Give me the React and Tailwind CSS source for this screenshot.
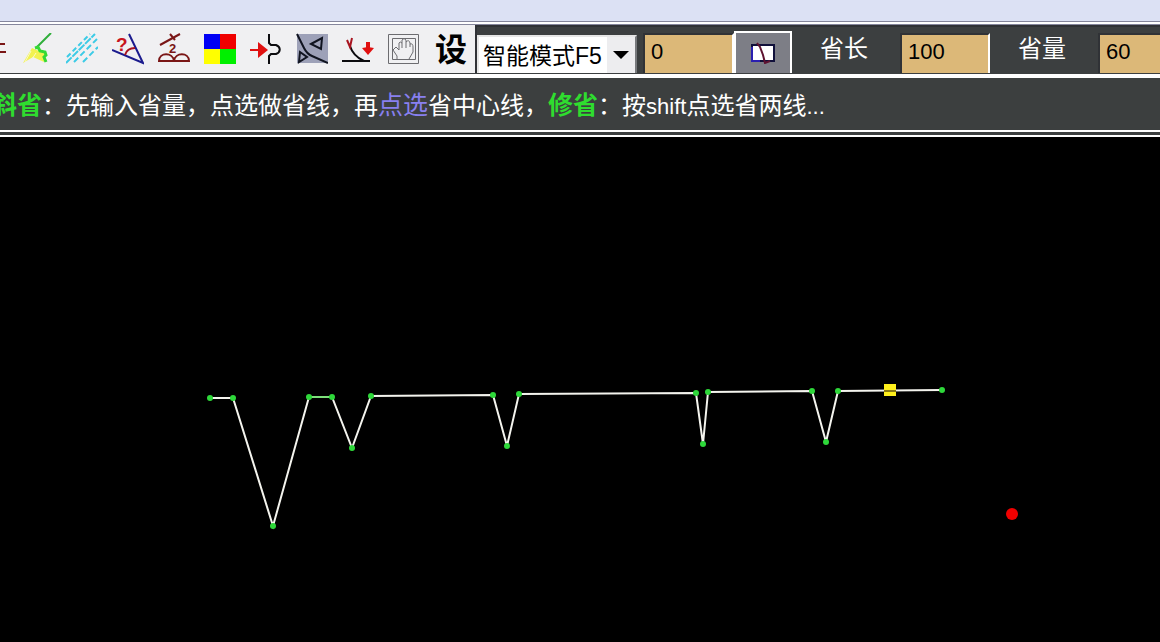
import React, { useState } from 'react';

const points = [
  [210, 261], [233, 261], [273, 389], [309, 260], [332, 260], [352, 311],
  [371, 259], [493, 258], [507, 309], [519, 257], [696, 256], [703, 307],
  [708, 255], [812, 254], [826, 305], [838, 254], [942, 253]
];

const tools = [
  {
    name: '扫除',
    icon: (
      <>
        <path d="M12 15L3 30L13 24L24 29L26 21Z" fill="#f2f250" />
        <path d="M11 18L5 29M16 20L12 26" stroke="#fafac8" fill="none" />
        <path d="M31 0L17 14" stroke="#2fae3a" strokeWidth="2" />
        <path d="M15 15L18 14L20 18L25 19L26 22L24 24L26 29" stroke="#35d935" strokeWidth="3" fill="none" />
      </>
    )
  },
  {
    name: '斜线',
    icon: (
      <g stroke="#3ccbe6" strokeWidth="2" fill="none">
        <path d="M0 30L29 1" strokeDasharray="8 1" />
        <path d="M1 24L24 1" strokeDasharray="5 3" />
        <path d="M8 29L31 6" strokeDasharray="6 3" />
        <path d="M17 29L32 14" strokeDasharray="6 3" />
      </g>
    )
  },
  {
    name: '角度',
    icon: (
      <>
        <path d="M0 17L31 30L17 1" stroke="#1b1b8e" strokeWidth="2" fill="none" />
        <path d="M23 15Q15 15 13 22" stroke="#a81420" strokeWidth="2" fill="none" />
        <text x="4" y="18" fontSize="19" fontWeight="bold" fontFamily="Liberation Sans, sans-serif" fill="#c8141e">?</text>
      </>
    )
  },
  {
    name: '等分',
    icon: (
      <>
        <path d="M2 12L22 1M12 1L17 7" stroke="#7a1616" strokeWidth="2" />
        <text x="11" y="20" fontSize="13" fontWeight="bold" fontFamily="Liberation Sans, sans-serif" fill="#7a1616">2</text>
        <path d="M1 28C1 19 15 19 16 28C17 19 31 19 31 28Z" stroke="#7a1616" strokeWidth="2" fill="none" />
      </>
    )
  },
  {
    name: '颜色',
    icon: (
      <>
        <path d="M0 1H16V16H0Z" fill="#0000f5" />
        <path d="M16 1H32V16H16Z" fill="#f00000" />
        <path d="M0 16H16V31H0Z" fill="#ffff00" />
        <path d="M16 16H32V31H16Z" fill="#00f000" />
      </>
    )
  },
  {
    name: '加省',
    icon: (
      <>
        <path d="M0 17H9" stroke="#e01010" strokeWidth="2" />
        <path d="M8 9L18 17L8 25Z" fill="#e01010" />
        <path d="M19 1V10L21 12H26C31 14 31 19 26 21H21L19 23V31" stroke="#0c0c10" strokeWidth="2" fill="none" />
      </>
    )
  },
  {
    name: '裁片',
    icon: (
      <>
        <path d="M1 1H32V30H1Z" fill="#9da1b8" />
        <g stroke="#101420" strokeWidth="2" fill="none">
          <path d="M1 1L8 15Q11 21 16 23L32 30" />
          <path d="M15 11L26 5L25 16Z" />
          <path d="M4 19L11 24L3 29Z" />
        </g>
      </>
    )
  },
  {
    name: '转省',
    icon: (
      <>
        <path d="M0 28H28M8 13Q11 23 22 28" stroke="#0c0c10" strokeWidth="2" fill="none" />
        <path d="M5 7L8 14L10 5" stroke="#a81420" strokeWidth="2" fill="none" />
        <path d="M26 9V16" stroke="#e01010" strokeWidth="4" />
        <path d="M20 15L26 14L32 15L26 22Z" fill="#e01010" />
      </>
    )
  },
  {
    name: '移动',
    icon: (
      <g stroke="#6c6c70" fill="none">
        <path d="M0.5 1.5H30.5V30.5H0.5Z" />
        <path d="M4.5 5.5H27.5V26.5H4.5Z" />
        <path d="M9 26V23L5 17L8 14L11 17V10Q12 8 14 10V7Q16 4 18 7V15M14 10V15M18 9Q21 6 22 10V14M22 11Q25 10 25 14V19L21 26" />
      </g>
    )
  }
];

const fieldClass =
  'h-10 border-2 border-b-0 border-l-[#303236] border-t-[#303236] border-r-white bg-[#dcb878] px-1.5 pb-1 text-[22px] text-black outline-none rounded-none';

const labelClass = 'w-[108px] shrink-0 self-start pt-1 pr-1 text-center text-2xl leading-9 text-white';

const ToolButton = ({ name, children }) => (
  <button type="button" aria-label={name} className="flex w-[46px] shrink-0 items-center justify-center">
    <svg width="32" height="32" viewBox="0 0 32 32">{children}</svg>
  </button>
);

const Toolbar = () => {
  const [mode, setMode] = useState('F5');
  const [values, setValues] = useState({ offset: '0', length: '100', amount: '60' });

  const onChange = e => setValues({ ...values, [e.target.name]: e.target.value });

  return (
    <div className="flex h-12 overflow-hidden bg-[#f0f0f2]">
      <button type="button" aria-label="线条" className="w-[13px] shrink-0">
        <svg width="13" height="32" viewBox="0 0 13 32">
          <path d="M0 11H5M0 19H6" stroke="#7a1616" strokeWidth="2" />
        </svg>
      </button>
      {tools.map(tool => (
        <ToolButton key={tool.name} name={tool.name}>{tool.icon}</ToolButton>
      ))}
      <button type="button" className="w-12 shrink-0 pt-0.5 text-[32px] leading-8 font-bold text-black">设</button>

      <div className="flex flex-1 items-end border-l-2 border-t-2 border-[#303236] bg-[#3c3f40]">
        {/* Mode */}
        <div className="relative h-[38px] w-40 shrink-0 border-2 border-b-0 border-[#e6e6e6] border-r-[#77797c]">
          <select
            aria-label="模式"
            value={mode}
            onChange={e => setMode(e.target.value)}
            className="h-full w-full appearance-none rounded-none bg-white pt-0.5 pl-1 text-[23px] text-black outline-none"
          >
            <option value="F5">智能模式F5</option>
          </select>
          <span className="pointer-events-none absolute inset-y-0 right-0 flex w-7 items-center justify-center bg-[#ededef]">
            <svg width="16" height="8" viewBox="0 0 16 8">
              <path d="M0 0H16L8 8Z" fill="#000" />
            </svg>
          </span>
        </div>

        <input aria-label="数值" name="offset" value={values.offset} onChange={onChange} className={`ml-1.5 w-[91px] shrink-0 ${fieldClass}`} />
        <button
          type="button"
          aria-label="纸样"
          className="flex h-[42px] w-[58px] shrink-0 items-center justify-center border-2 border-b-0 border-white bg-[#7d7e86]"
        >
          <svg width="26" height="22" viewBox="0 0 26 22">
            <path d="M2 3H24V19H2Z" fill="#fff" stroke="#10103a" strokeWidth="2" />
            <path d="M2 5V19H10" fill="none" stroke="#2a1fb0" strokeWidth="2" />
            <path d="M7 1L10 5L13 13L15 21L20 19" fill="none" stroke="#5e1230" strokeWidth="2" />
          </svg>
        </button>

        {/* Dart length */}
        <label htmlFor="length" className={labelClass}>省长</label>
        <input id="length" name="length" value={values.length} onChange={onChange} className={`w-[90px] shrink-0 ${fieldClass}`} />

        {/* Dart amount */}
        <label htmlFor="amount" className={labelClass}>省量</label>
        <input id="amount" name="amount" value={values.amount} onChange={onChange} className={`w-[90px] shrink-0 ${fieldClass}`} />
      </div>
    </div>
  );
};

const StatusBar = () => (
  <div className="overflow-hidden border-t-2 border-white bg-[#3c3f3f] pt-1">
    <p className="-ml-2 whitespace-nowrap text-2xl leading-12 text-white">
      <span className="text-[25px] leading-6 font-bold text-[#2fdc2f]">斜省</span>
      ：先输入省量，点选做省线，再
      <span className="text-[25px] leading-6 text-[#8880f0]">点选</span>
      省中心线，
      <span className="text-[25px] leading-6 font-bold text-[#2fdc2f]">修省</span>
      ：按<span className="text-[22px] leading-6">shift</span>点选省两线<span className="text-[22px] leading-6">...</span>
    </p>
  </div>
);

const Canvas = () => (
  <svg className="block h-auto w-full" viewBox="0 0 1160 505">
    <polyline points={points.map(p => p.join(',')).join(' ')} fill="none" stroke="#f4f4ee" strokeWidth="2" />
    <path d="M309 260H332" stroke="#7de07a" strokeWidth="2" />
    {points.map(([x, y]) => (
      <circle key={x} cx={x} cy={y} r="3" fill="#2ed83a" />
    ))}
    <rect x="884" y="247" width="12" height="12" fill="#fff01c" />
    <path d="M884 254H896" stroke="#8a7a10" strokeWidth="2" />
    <circle cx="1012" cy="377" r="6" fill="#f00000" />
  </svg>
);

const App = () => (
  <div className="flex min-h-screen flex-col bg-black font-['Liberation_Sans','Noto_Sans_CJK_SC',sans-serif]">
    <header>
      <div className="h-[21px] bg-[#dce1f4]" />
      <div className="h-1 border-y border-[#85869c] bg-white" />
      <Toolbar />
      <div className="h-[3px] border-t border-[#3c3f40] bg-white" />
      <StatusBar />
      <div className="h-[7px] border-y-2 border-white bg-[#3c3f3f]" />
    </header>
    <main className="flex-1">
      <Canvas />
    </main>
  </div>
);

export default App;
